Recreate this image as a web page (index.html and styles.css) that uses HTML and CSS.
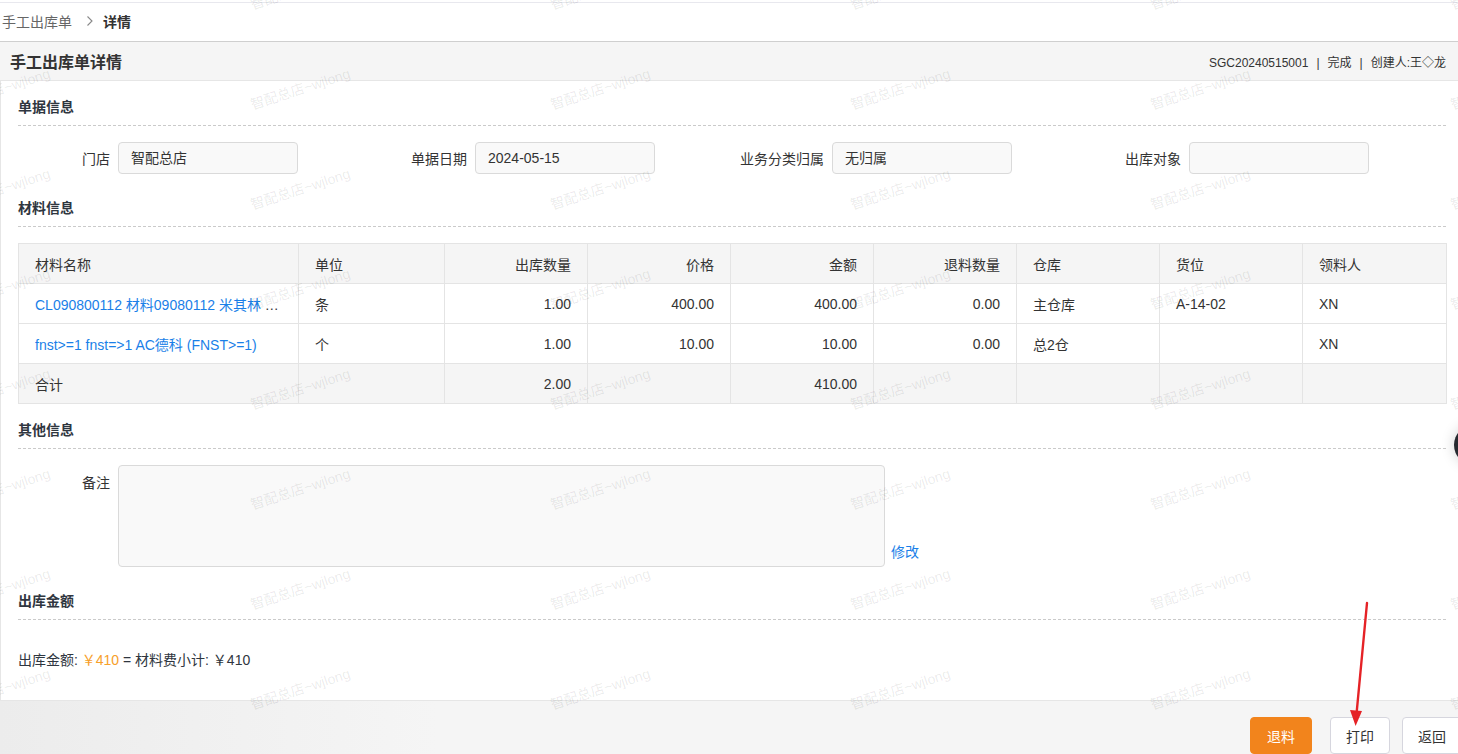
FILE: index.html
```html
<!DOCTYPE html>
<html lang="zh-CN">
<head>
  <meta charset="UTF-8">
  <meta name="viewport" content="width=device-width, initial-scale=1.0">
  <title>手工出库单详情</title>
  <link rel="stylesheet" href="styles.css">
</head>
<body>
  <!-- Breadcrumb -->
  <div class="crumbs">
    <span class="crumb">手工出库单</span>
    <svg class="crumb-sep" width="8" height="12" viewBox="0 0 8 12"><path d="M1.5 1.5 L6 6 L1.5 10.5" fill="none" stroke="#888" stroke-width="1.1"/></svg>
    <span class="crumb current">详情</span>
  </div>

  <!-- Page header -->
  <div class="page-head">
    <h1>手工出库单详情</h1>
    <div class="meta">SGC20240515001<span class="sep">|</span>完成<span class="sep">|</span>创建人:王◇龙</div>
  </div>

  <div class="content">
    <div class="section-title first">单据信息</div>
    <div class="field-row">
      <div class="field"><label>门店</label><div class="box">智配总店</div></div>
      <div class="field"><label>单据日期</label><div class="box">2024-05-15</div></div>
      <div class="field"><label>业务分类归属</label><div class="box">无归属</div></div>
      <div class="field"><label>出库对象</label><div class="box"></div></div>
    </div>

    <div class="section-title">材料信息</div>
    <table class="data-table">
      <colgroup>
        <col style="width:280px"><col style="width:146px"><col style="width:143px">
        <col style="width:143px"><col style="width:143px"><col style="width:143px">
        <col style="width:143px"><col style="width:143px"><col style="width:144px">
      </colgroup>
      <thead>
        <tr>
          <th>材料名称</th><th>单位</th><th class="num">出库数量</th><th class="num">价格</th>
          <th class="num">金额</th><th class="num">退料数量</th><th>仓库</th><th>货位</th><th>领料人</th>
        </tr>
      </thead>
      <tbody>
        <tr>
          <td class="name"><a href="#">CL090800112 材料09080112 米其林 Pilot Sport 4</a></td>
          <td>条</td><td class="num">1.00</td><td class="num">400.00</td><td class="num">400.00</td>
          <td class="num">0.00</td><td>主仓库</td><td>A-14-02</td><td>XN</td>
        </tr>
        <tr>
          <td class="name"><a href="#">fnst&gt;=1 fnst=&gt;1 AC德科 (FNST&gt;=1)</a></td>
          <td>个</td><td class="num">1.00</td><td class="num">10.00</td><td class="num">10.00</td>
          <td class="num">0.00</td><td>总2仓</td><td></td><td>XN</td>
        </tr>
        <tr class="total">
          <td>合计</td><td></td><td class="num">2.00</td><td></td><td class="num">410.00</td>
          <td></td><td></td><td></td><td></td>
        </tr>
      </tbody>
    </table>

    <div class="section-title">其他信息</div>
    <div class="remark-row">
      <label>备注</label>
      <div class="remark-box"></div>
      <a href="#" class="edit-link">修改</a>
    </div>

    <div class="section-title">出库金额</div>
    <p class="amount">出库金额: <span class="orange">￥410</span> = 材料费小计: ￥410</p>
  </div>

  <div class="footer">
    <button class="btn btn-orange">退料</button>
    <button class="btn">打印</button>
    <button class="btn last">返回</button>
  </div>

  <!-- annotation arrow -->
  <svg class="mark-arrow" width="40" height="136" viewBox="0 0 40 136">
    <line x1="27" y1="7" x2="16.5" y2="118" stroke="#e52226" stroke-width="2.4" stroke-linecap="round"/>
    <path d="M15.6 130 L10 114 L22 115 Z" fill="#e52226"/>
  </svg>

  <div class="float-ball"></div>

  <div class="watermark"><div class="watermark-grid" id="watermark"></div></div>

  <script>
    // fill the watermark grid
    const wm = document.getElementById('watermark');
    for (let i = 0; i < 54; i++) {
      const s = document.createElement('span');
      s.textContent = '智配总店~wjlong';
      wm.appendChild(s);
    }
  </script>
</body>
</html>
```

FILE: styles.css
```css
/* Basic Reset */
* {
  margin: 0;
  padding: 0;
  box-sizing: border-box;
}

html, body {
  overflow: hidden;
}

body {
  width: 1458px;
  height: 754px;
  background-color: #fff;
  color: #333;
  font-family: "Liberation Sans", "Noto Sans CJK SC", sans-serif;
  font-size: 14px;
  position: relative;
}

a {
  color: #1a7fe8;
  text-decoration: none;
}

/* Breadcrumb */
.crumbs {
  margin-top: 2px;
  height: 40px;
  border-top: 1px solid #e8e8ee;
  border-bottom: 1px solid #cfcfcf;
  display: flex;
  align-items: center;
  padding: 0 0 3px 2px;
}

.crumb {
  color: #666;
  font-size: 14px;
}

.crumb.current {
  color: #333;
  font-weight: 600;
}

.crumb-sep {
  margin: 0 9px 0 14px;
}

/* Page header */
.page-head {
  height: 39px;
  background-color: #f5f5f5;
  border-bottom: 1px solid #e6e6e6;
  display: flex;
  align-items: center;
  justify-content: space-between;
  padding: 0 12px 0 10px;
}

.page-head h1 {
  font-size: 16px;
  font-weight: 600;
  color: #333;
}

.meta {
  font-size: 12px;
  color: #333;
}

.meta .sep {
  margin: 0 8px;
}

/* Content */
.content {
  height: 620px;
  border-left: 1px solid #e6e6e6;
  border-bottom: 1px solid #e6e6e6;
  padding: 16px 12px 0 17px;
}

.section-title {
  font-size: 14px;
  font-weight: 600;
  line-height: 20px;
  color: #2f3640;
  padding-bottom: 8px;
  border-bottom: 1px dashed #cacaca;
  margin-top: 24px;
  margin-bottom: 16px;
}

.section-title.first {
  margin-top: 0;
}

.data-table + .section-title {
  margin-top: 16px;
}

.field-row {
  display: grid;
  grid-template-columns: repeat(4, 357px);
}

.field {
  display: flex;
  align-items: center;
}

.field label,
.remark-row label {
  width: 100px;
  flex-shrink: 0;
  padding-right: 8px;
  text-align: right;
  color: #333;
}

.box {
  width: 180px;
  height: 32px;
  line-height: 30px;
  padding: 0 12px;
  border: 1px solid #dadada;
  border-radius: 4px;
  background-color: #f9f9f9;
  color: #333;
}

/* Table */
.data-table {
  width: 1428px;
  table-layout: fixed;
  border-collapse: collapse;
}

.data-table th,
.data-table td {
  height: 40px;
  padding: 0 16px;
  border: 1px solid #e4e4e4;
  text-align: left;
  font-weight: normal;
  color: #333;
  white-space: nowrap;
  overflow: hidden;
  text-overflow: ellipsis;
}

.data-table th {
  background-color: #f5f5f5;
}

.data-table .num {
  text-align: right;
}

.data-table .total td {
  background-color: #f5f5f5;
}

.data-table td.name a {
  color: #1a7fe8;
}

/* Remark */
.remark-row {
  display: flex;
  align-items: flex-start;
}

.remark-row label {
  padding-top: 7px;
}

.remark-box {
  width: 767px;
  height: 102px;
  border: 1px solid #dadada;
  border-radius: 4px;
  background-color: #f9f9f9;
}

.edit-link {
  align-self: flex-end;
  margin-left: 6px;
  margin-bottom: 6px;
  font-size: 14px;
}

.amount {
  margin-top: 30px;
  line-height: 20px;
  color: #2f3640;
}

.amount .orange {
  color: #f7a02a;
}

/* Footer */
.footer {
  height: 53px;
  background: linear-gradient(to right, #ececec, #f5f5f5 30%, #f5f5f5);
  display: flex;
  justify-content: flex-end;
  align-items: flex-start;
  padding-top: 16px;
  overflow: hidden;
}

.btn {
  height: 37px;
  width: 60px;
  border: 1px solid #d6d6de;
  border-radius: 4px;
  background-color: #fff;
  color: #333;
  font-size: 14px;
  font-family: "Liberation Sans", "Noto Sans CJK SC", sans-serif;
  margin-left: 12px;
  flex-shrink: 0;
}

.btn-orange {
  width: 62px;
  background-color: #f2841c;
  border-color: #f2841c;
  color: #fff;
  margin-right: 6px;
}

.btn.last {
  margin-right: -4px;
}

/* Overlays */
.mark-arrow {
  position: absolute;
  left: 1340px;
  top: 596px;
}

.float-ball {
  position: absolute;
  left: 1454px;
  top: 425px;
  width: 40px;
  height: 40px;
  border-radius: 50%;
  background-color: #262a30;
  box-shadow: 0 0 14px rgba(0, 0, 0, 0.18);
}

.watermark {
  position: absolute;
  inset: 0;
  overflow: hidden;
  pointer-events: none;
}

.watermark-grid {
  margin: -62px 0 0 -150px;
  display: grid;
  grid-template-columns: repeat(6, 300px);
  grid-auto-rows: 100px;
  place-items: center;
}

.watermark span {
  transform: rotate(-18deg);
  font-size: 14px;
  color: rgba(0, 0, 0, 0.09);
  white-space: nowrap;
}
```
